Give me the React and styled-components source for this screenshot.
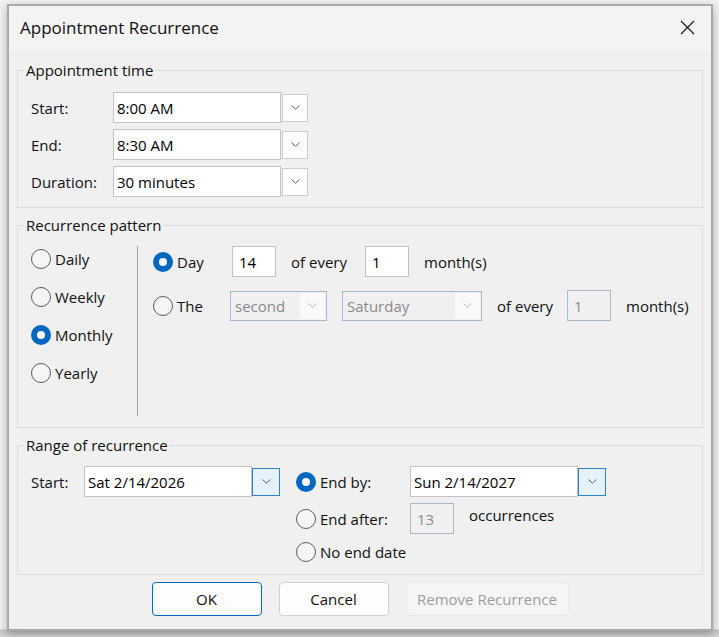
import React from "react";
import styled, { createGlobalStyle, css } from "styled-components";

const GlobalStyle = createGlobalStyle`
  html, body {
    margin: 0;
    padding: 0;
    background: #ececec;
  }
  body {
    font-family: "Open Sans", "Noto Sans", sans-serif;
    font-size: 15px;
    color: #111;
  }
`;

const Page = styled.div`
  width: 719px;
  height: 637px;
  box-sizing: border-box;
  padding: 4px 0 0 7px;
  overflow: hidden;
  background:
    linear-gradient(to bottom, transparent 629px, #c4c4c4 630px, #d8d8d8 637px),
    #f2f2f2;
`;

const Dialog = styled.div`
  width: 706px;
  height: 627px;
  box-sizing: border-box;
  border: 2px solid #a9a9a9;
  background: #f0f0f0;
  display: flex;
  flex-direction: column;
  box-shadow: 0 3px 9px rgba(0, 0, 0, 0.3);
`;

const TitleBar = styled.div`
  height: 43px;
  flex-shrink: 0;
  background: #f3f3f3;
  display: flex;
  align-items: center;
  justify-content: space-between;
  padding: 0 16px 0 11px;
`;

const Title = styled.div`
  font-size: 17px;
  color: #111;
`;

const CloseButton = styled.div`
  width: 16px;
  height: 16px;
  display: flex;
  align-items: center;
  justify-content: center;
`;

const Body = styled.div`
  padding: 11px 8px 0 8px;
  display: flex;
  flex-direction: column;
`;

const Group = styled.fieldset`
  margin: ${(p) => (p.$first ? "0" : "7px 0 0 0")};
  border: 1px solid #dcdcdc;
  padding: ${(p) => p.$pad || "12px 10px 10px 13px"};
  min-width: 0;
`;

const Legend = styled.legend`
  padding: 0 2px;
  margin-left: -7px;
  line-height: 20px;
  font-size: 15px;
  color: #111;
`;

const Rows = styled.div`
  display: flex;
  flex-direction: column;
  gap: ${(p) => p.$gap || 6}px;
`;

const Row = styled.div`
  display: flex;
  align-items: center;
  height: ${(p) => p.$h || 31}px;
`;

const Label = styled.div`
  width: ${(p) => p.$w}px;
  flex-shrink: 0;
`;

const Text = styled.div`
  flex-shrink: 0;
  box-sizing: border-box;
  padding-left: 15px;
  white-space: nowrap;
  ${(p) => p.$w && css`width: ${p.$w}px;`}
  ${(p) =>
    p.$top &&
    css`
      align-self: flex-start;
      line-height: 24px;
    `}
`;

const Field = styled.div`
  width: ${(p) => p.$w}px;
  height: ${(p) => p.$h || 31}px;
  box-sizing: border-box;
  flex-shrink: 0;
  display: flex;
  align-items: center;
  padding-left: ${(p) => p.$pl || 3}px;
  background: ${(p) => (p.$disabled ? "#f0f0f0" : "#ffffff")};
  border: 1px solid ${(p) => (p.$disabled ? "#a8b9cd" : "#c3c3c3")};
  color: ${(p) => (p.$disabled ? "#8a8a8a" : "#000")};
  white-space: nowrap;
`;

const DropButton = styled.div`
  width: ${(p) => p.$w || 26}px;
  height: 28px;
  box-sizing: border-box;
  flex-shrink: 0;
  margin-left: ${(p) => (p.$active ? 0 : 1)}px;
  display: flex;
  align-items: center;
  justify-content: center;
  background: ${(p) => (p.$active ? "#e5f1fb" : "#fdfdfd")};
  border: 1px solid ${(p) => (p.$active ? "#2f7fd0" : "#cccccc")};
`;

const Select = styled.div`
  width: ${(p) => p.$w}px;
  height: 30px;
  box-sizing: border-box;
  flex-shrink: 0;
  display: flex;
  align-items: stretch;
  border: 1px solid #a8b9cd;
  background: #f0f0f0;
  color: #8a8a8a;
`;

const SelectValue = styled.div`
  flex: 1;
  display: flex;
  align-items: center;
  padding-left: 4px;
`;

const SelectArrow = styled.div`
  width: 25px;
  margin: 1px;
  display: flex;
  align-items: center;
  justify-content: center;
  background: #f9f9f9;
`;

const RadioItem = styled.div`
  display: flex;
  align-items: center;
  gap: 4px;
  height: 24px;
  flex-shrink: 0;
  white-space: nowrap;
  ${(p) => p.$w && css`width: ${p.$w}px;`}
`;

const RadioCircle = styled.span`
  width: 20px;
  height: 20px;
  box-sizing: border-box;
  border-radius: 50%;
  flex-shrink: 0;
  position: relative;
  border: 1px solid #5c5c5c;
  background: #f5f5f5;
  ${(p) =>
    p.$checked &&
    css`
      border: none;
      background: #0067c0;
      &::after {
        content: "";
        position: absolute;
        left: 6px;
        top: 6px;
        width: 8px;
        height: 8px;
        border-radius: 50%;
        background: #ffffff;
      }
    `}
`;

const PatternContent = styled.div`
  display: flex;
  height: 170px;
`;

const FreqColumn = styled.div`
  width: 106px;
  padding-top: 1px;
  display: flex;
  flex-direction: column;
  gap: 14px;
`;

const Divider = styled.div`
  width: 1px;
  background: #a3a3a3;
`;

const PatternColumn = styled.div`
  padding-left: 15px;
  display: flex;
  flex-direction: column;
  gap: 13px;
`;

const RangeContent = styled.div`
  display: flex;
  align-items: flex-start;
`;

const RangeStart = styled.div`
  display: flex;
  align-items: center;
  height: 31px;
`;

const RangeEnd = styled.div`
  margin-left: 16px;
  display: flex;
  flex-direction: column;
  gap: 6px;
`;

const ButtonBar = styled.div`
  margin-top: 7px;
  display: flex;
  justify-content: center;
  gap: 17px;
`;

const Button = styled.div`
  width: ${(p) => (p.$wide ? 163 : 110)}px;
  height: 34px;
  box-sizing: border-box;
  border-radius: 4px;
  display: flex;
  align-items: center;
  justify-content: center;
  background: #fdfdfd;
  border: 1px solid #d0d0d0;
  color: #111;
  ${(p) => p.$default && css`border-color: #0067c0;`}
  ${(p) =>
    p.$disabled &&
    css`
      background: #f5f5f5;
      border-color: #e9e9e9;
      color: #9d9d9d;
    `}
`;

function Chevron({ color = "#5f5f5f" }) {
  return (
    <svg width="11" height="7" viewBox="0 0 11 7">
      <path d="M1.5 1.5 L5.5 5.2 L9.5 1.5" fill="none" stroke={color} strokeWidth="1" />
    </svg>
  );
}

function Radio({ checked, children, w }) {
  return (
    <RadioItem $w={w}>
      <RadioCircle $checked={checked} />
      <span>{children}</span>
    </RadioItem>
  );
}

function Combo({ value, active }) {
  return (
    <>
      <Field $w={168}>{value}</Field>
      <DropButton $active={active} $w={active ? 28 : 26}>
        <Chevron />
      </DropButton>
    </>
  );
}

function DisabledSelect({ value, w }) {
  return (
    <Select $w={w}>
      <SelectValue>{value}</SelectValue>
      <SelectArrow>
        <Chevron color="#b9b9b9" />
      </SelectArrow>
    </Select>
  );
}

export default function App() {
  return (
    <Page>
      <GlobalStyle />
      <Dialog>
        <TitleBar>
          <Title>Appointment Recurrence</Title>
          <CloseButton>
            <svg width="15" height="15" viewBox="0 0 15 15">
              <path d="M1 1 L14 14 M14 1 L1 14" stroke="#1a1a1a" strokeWidth="1.2" />
            </svg>
          </CloseButton>
        </TitleBar>

        <Body>
          <Group $first>
            <Legend>Appointment time</Legend>
            <Rows>
              <Row>
                <Label $w={82}>Start:</Label>
                <Combo value="8:00 AM" />
              </Row>
              <Row>
                <Label $w={82}>End:</Label>
                <Combo value="8:30 AM" />
              </Row>
              <Row>
                <Label $w={82}>Duration:</Label>
                <Combo value="30 minutes" />
              </Row>
            </Rows>
          </Group>

          <Group $pad="11px 10px 11px 13px">
            <Legend>Recurrence pattern</Legend>
            <PatternContent>
              <FreqColumn>
                <Radio>Daily</Radio>
                <Radio>Weekly</Radio>
                <Radio checked>Monthly</Radio>
                <Radio>Yearly</Radio>
              </FreqColumn>
              <Divider />
              <PatternColumn>
                <Row>
                  <Radio checked w={79}>Day</Radio>
                  <Field $w={44} $pl={6}>14</Field>
                  <Text $w={89}>of every</Text>
                  <Field $w={44} $pl={6}>1</Field>
                  <Text>month(s)</Text>
                </Row>
                <Row>
                  <Radio w={77}>The</Radio>
                  <DisabledSelect value="second" w={97} />
                  <Text $w={15} />
                  <DisabledSelect value="Saturday" w={140} />
                  <Text $w={85}>of every</Text>
                  <Field $w={44} $pl={6} $disabled>1</Field>
                  <Text>month(s)</Text>
                </Row>
              </PatternColumn>
            </PatternContent>
          </Group>

          <Group $pad="11px 10px 10px 13px">
            <Legend>Range of recurrence</Legend>
            <RangeContent>
              <RangeStart>
                <Label $w={53}>Start:</Label>
                <Combo value="Sat 2/14/2026" active />
              </RangeStart>
              <RangeEnd>
                <Row>
                  <Radio checked w={114}>End by:</Radio>
                  <Combo value="Sun 2/14/2027" active />
                </Row>
                <Row>
                  <Radio w={114}>End after:</Radio>
                  <Field $w={44} $pl={6} $disabled>13</Field>
                  <Text $top>occurrences</Text>
                </Row>
                <Row $h={24}>
                  <Radio>No end date</Radio>
                </Row>
              </RangeEnd>
            </RangeContent>
          </Group>

          <ButtonBar>
            <Button $default>OK</Button>
            <Button>Cancel</Button>
            <Button $wide $disabled>Remove Recurrence</Button>
          </ButtonBar>
        </Body>
      </Dialog>
    </Page>
  );
}
